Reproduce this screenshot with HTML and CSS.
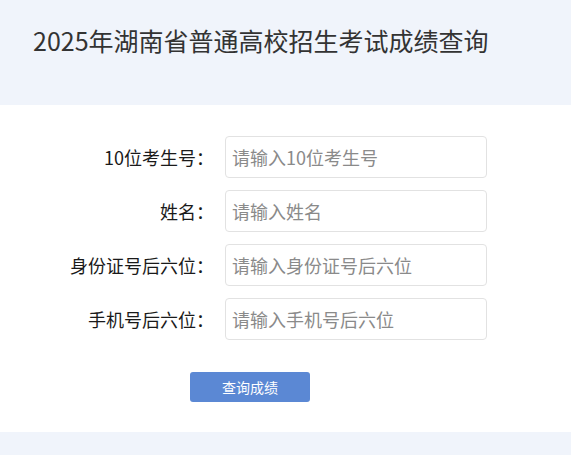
FILE: index.html
```html
<!DOCTYPE html>
<html lang="zh-CN">
<head>
    <meta charset="UTF-8">
    <title>2025年湖南省普通高校招生考试成绩查询</title>
    <link rel="stylesheet" href="styles.css">
</head>
<body>
    <div class="header">
        <h1>2025年湖南省普通高校招生考试成绩查询</h1>
    </div>
    <div class="main">
        <form class="query-form">
            <div class="form-row">
                <label for="ksh">10位考生号：</label>
                <input id="ksh" type="text" placeholder="请输入10位考生号">
            </div>
            <div class="form-row">
                <label for="xm">姓名：</label>
                <input id="xm" type="text" placeholder="请输入姓名">
            </div>
            <div class="form-row">
                <label for="sfzh">身份证号后六位：</label>
                <input id="sfzh" type="text" placeholder="请输入身份证号后六位">
            </div>
            <div class="form-row">
                <label for="sjh">手机号后六位：</label>
                <input id="sjh" type="text" placeholder="请输入手机号后六位">
            </div>
            <div class="form-actions">
                <button type="button" class="btn-query">查询成绩</button>
            </div>
        </form>
    </div>
</body>
</html>
```

FILE: styles.css
```css
body {
    margin: 0;
    background-color: #f0f4fb;
    font-family: "Noto Sans CJK SC", "Noto Sans", sans-serif;
}
.header {
    height: 105px;
    box-sizing: border-box;
    padding: 22px 0 0 33px;
}
.header h1 {
    margin: 0;
    font-size: 25px;
    font-weight: normal;
    line-height: 36px;
    color: #333;
}
.main {
    background-color: #fff;
    padding: 31px 0 30px;
}
.query-form {
    display: flex;
    flex-direction: column;
    gap: 12px;
}
.form-row {
    display: grid;
    grid-template-columns: 214px 262px;
    column-gap: 11px;
    align-items: center;
}
.form-row label {
    text-align: right;
    font-size: 18px;
    color: #1a1a1a;
}
.form-row input {
    height: 42px;
    box-sizing: border-box;
    padding: 0 6px;
    border: 1px solid #e2e2e2;
    border-radius: 4px;
    font-family: inherit;
    font-size: 18px;
    color: #333;
    outline: none;
}
.form-row input::placeholder {
    color: #8a8a8a;
}
.form-actions {
    margin-top: 20px;
    padding-left: 190px;
}
.btn-query {
    width: 120px;
    height: 30px;
    border: none;
    border-radius: 3px;
    background-color: #5b88d4;
    color: #fff;
    font-family: inherit;
    font-size: 14px;
    cursor: pointer;
}
```
